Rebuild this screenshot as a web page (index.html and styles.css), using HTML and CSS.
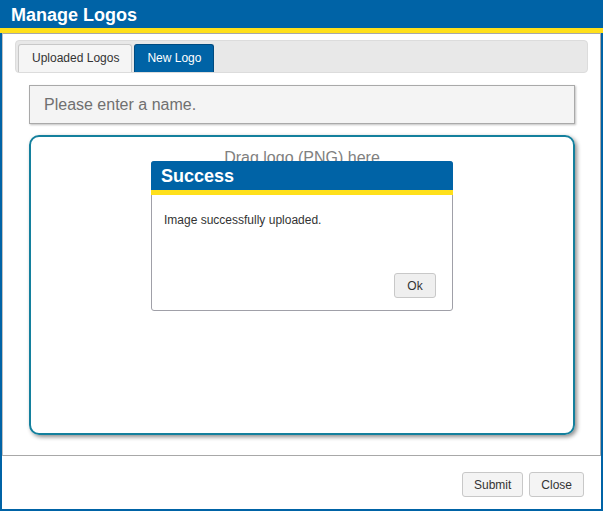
FILE: index.html
```html
<!DOCTYPE html>
<html lang="en">
<head>
    <meta charset="UTF-8">
    <title>Manage Logos</title>
    <link rel="stylesheet" href="styles.css">
</head>
<body>

<div class="window">
    <div class="window-header">Manage Logos</div>
    <div class="window-body">
        <div class="tabs">
            <div class="tab">Uploaded Logos</div>
            <div class="tab active">New Logo</div>
        </div>
        <div class="tab-content">
            <input type="text" class="name-input" placeholder="Please enter a name.">
            <div class="drop-zone">Drag logo (PNG) here</div>
        </div>
    </div>
    <div class="window-footer">
        <button class="btn">Submit</button>
        <button class="btn">Close</button>
    </div>

    <div class="dialog">
        <div class="dialog-header">Success</div>
        <div class="dialog-body">Image successfully uploaded.</div>
        <div class="dialog-footer">
            <button class="btn btn-ok">Ok</button>
        </div>
    </div>
</div>

</body>
</html>
```

FILE: styles.css
```css
* {
    box-sizing: border-box;
}
body {
    margin: 0;
    font-family: "Liberation Sans", Arial, sans-serif;
    background-color: white;
}
.window {
    position: relative;
    width: 603px;
    height: 511px;
    border: 2px solid #0063a6;
    border-top: none;
    display: flex;
    flex-direction: column;
}
.window-header {
    background-color: #0063a6;
    color: white;
    font-size: 18px;
    font-weight: bold;
    height: 33px;
    padding: 5px 0 0 11px;
    border-bottom: 5px solid #ffe01b;
    margin: 0 -2px;
}
.window-body {
    border: 1px solid #a8a8a8;
    border-left-color: #c0c0c0;
    height: 423px;
    padding: 6px 12px 0 12px;
}
.tabs {
    display: flex;
    gap: 2px;
    height: 33px;
    padding: 3px 2px 0 2px;
    background-color: #e8e8e8;
    border: 1px solid #dcdcdc;
    border-radius: 4px;
}
.tab {
    font-size: 12px;
    color: #333;
    background-color: #f5f5f5;
    border: 1px solid #c8c8c8;
    border-bottom: none;
    border-radius: 3px 3px 0 0;
    padding: 6px 12px 0 13px;
}
.tab.active {
    background-color: #0063a6;
    border-color: #004b80;
    color: white;
    padding: 6px 12px 0 12px;
}
.tab-content {
    padding: 12px 24px 0 14px;
}
.name-input {
    display: block;
    width: 546px;
    height: 39px;
    background-color: #f4f4f4;
    border: 1px solid #a9a9a9;
    box-shadow: 1px 1px 2px rgba(0, 0, 0, 0.25);
    font-family: inherit;
    font-size: 16px;
    padding: 0 14px;
    color: #333;
}
.name-input::placeholder {
    color: #707070;
}
.drop-zone {
    margin-top: 11px;
    width: 546px;
    height: 300px;
    border: 2px solid #14809d;
    border-radius: 10px;
    box-shadow: 2px 2px 4px rgba(0, 0, 0, 0.45);
    text-align: center;
    font-size: 16px;
    color: #808080;
    padding-top: 12px;
}
.window-footer {
    display: flex;
    justify-content: flex-end;
    gap: 6px;
    padding: 16px 17px 0 0;
}
.btn {
    font-family: inherit;
    font-size: 12px;
    color: #333;
    background-color: #f4f4f4;
    border: 1px solid #c8c8c8;
    border-radius: 3px;
    height: 25px;
    padding: 0 11px;
}
.dialog {
    position: absolute;
    left: 149px;
    top: 161px;
    width: 302px;
    height: 150px;
    background-color: white;
    border: 1px solid #a0a0a8;
    border-radius: 3px;
    display: flex;
    flex-direction: column;
}
.dialog-header {
    background-color: #0063a6;
    color: white;
    font-size: 18px;
    font-weight: bold;
    height: 34px;
    padding: 5px 0 0 10px;
    border-bottom: 5px solid #ffe01b;
    border-radius: 3px 3px 0 0;
    margin: -1px -1px 0 -1px;
}
.dialog-body {
    font-size: 12px;
    color: #333;
    padding: 18px 0 0 12px;
    flex: 1;
}
.dialog-footer {
    display: flex;
    justify-content: flex-end;
    padding: 0 16px 12px 0;
}
.btn-ok {
    width: 42px;
    height: 25px;
    padding: 0;
    background-color: #efefef;
}
```
